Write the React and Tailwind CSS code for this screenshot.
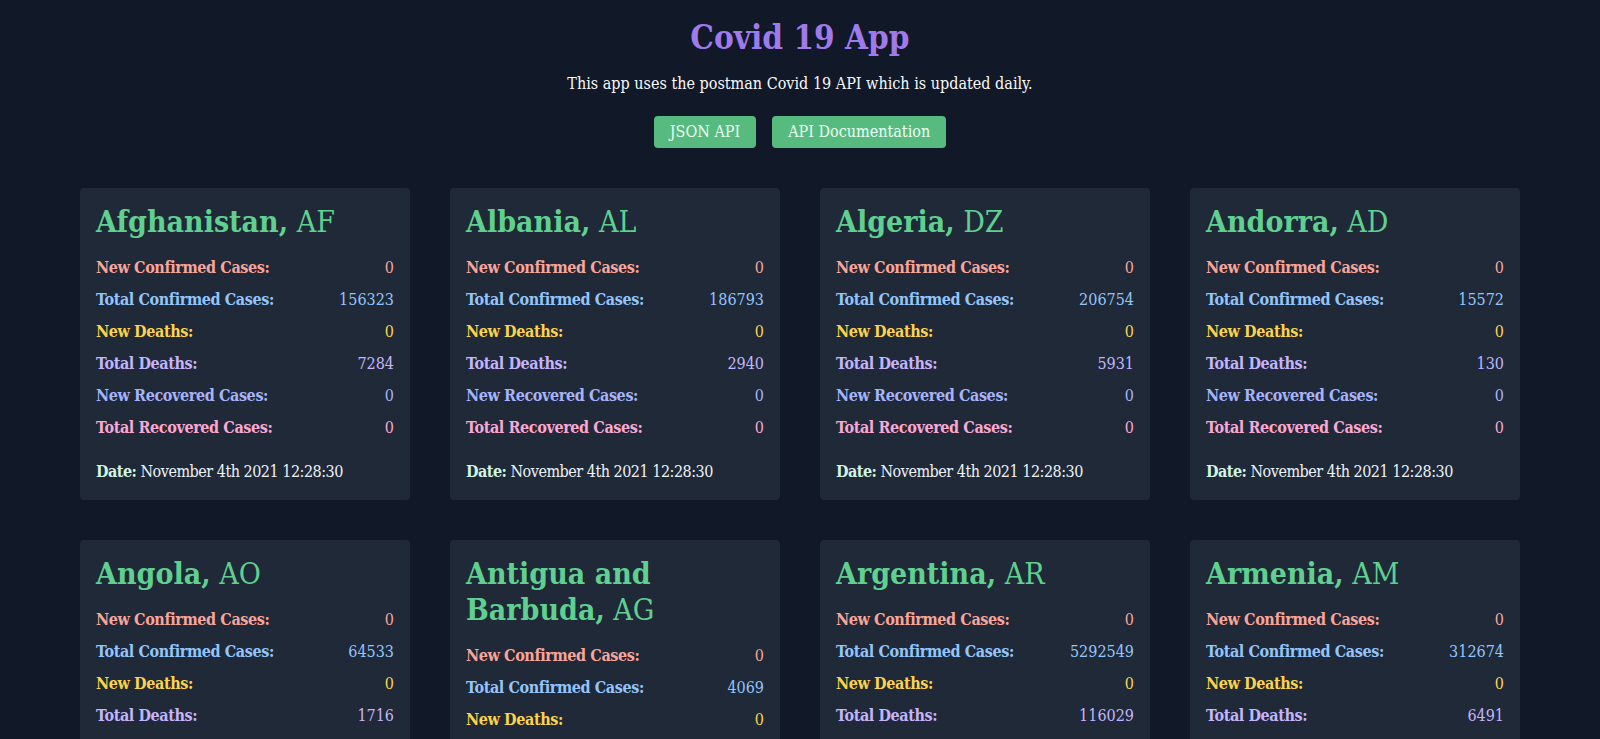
import { useState } from 'react'

const countries = [
  { name: 'Afghanistan', code: 'AF', newConfirmed: 0, totalConfirmed: 156323, newDeaths: 0, totalDeaths: 7284, newRecovered: 0, totalRecovered: 0 },
  { name: 'Albania', code: 'AL', newConfirmed: 0, totalConfirmed: 186793, newDeaths: 0, totalDeaths: 2940, newRecovered: 0, totalRecovered: 0 },
  { name: 'Algeria', code: 'DZ', newConfirmed: 0, totalConfirmed: 206754, newDeaths: 0, totalDeaths: 5931, newRecovered: 0, totalRecovered: 0 },
  { name: 'Andorra', code: 'AD', newConfirmed: 0, totalConfirmed: 15572, newDeaths: 0, totalDeaths: 130, newRecovered: 0, totalRecovered: 0 },
  { name: 'Angola', code: 'AO', newConfirmed: 0, totalConfirmed: 64533, newDeaths: 0, totalDeaths: 1716, newRecovered: 0, totalRecovered: 0 },
  { name: 'Antigua and Barbuda', code: 'AG', newConfirmed: 0, totalConfirmed: 4069, newDeaths: 0, totalDeaths: 108, newRecovered: 0, totalRecovered: 0 },
  { name: 'Argentina', code: 'AR', newConfirmed: 0, totalConfirmed: 5292549, newDeaths: 0, totalDeaths: 116029, newRecovered: 0, totalRecovered: 0 },
  { name: 'Armenia', code: 'AM', newConfirmed: 0, totalConfirmed: 312674, newDeaths: 0, totalDeaths: 6491, newRecovered: 0, totalRecovered: 0 },
]

function Row({ label, value, color }) {
  return (
    <div className={`flex justify-between py-1 ${color}`}>
      <span className="font-bold tracking-[-0.4px]">{label}</span>
      <span>{value}</span>
    </div>
  )
}

function CountryCard({ country }) {
  return (
    <div className="bg-[#1f2937] rounded p-4">
      <h2 className="text-3xl text-[#5fd08f] mb-3">
        <span className="font-bold">{country.name},</span> {country.code}
      </h2>
      <Row label="New Confirmed Cases:" value={country.newConfirmed} color="text-[#f9a59a]" />
      <Row label="Total Confirmed Cases:" value={country.totalConfirmed} color="text-[#93c5fd]" />
      <Row label="New Deaths:" value={country.newDeaths} color="text-[#fcd34d]" />
      <Row label="Total Deaths:" value={country.totalDeaths} color="text-[#c4b5fd]" />
      <Row label="New Recovered Cases:" value={country.newRecovered} color="text-[#a5b4fc]" />
      <Row label="Total Recovered Cases:" value={country.totalRecovered} color="text-[#f9a8d4]" />
      <div className="mt-4 text-[#edf2f7] tracking-[-0.5px]">
        <span className="font-bold text-[#d3f5e4]">Date:</span> November 4th 2021 12:28:30
      </div>
    </div>
  )
}

export default function App() {
  const [data] = useState(countries)

  return (
    <div className="min-h-screen bg-[#111827] text-white font-['DejaVu_Serif_Condensed','DejaVu_Serif',serif] pb-10">
      <header className="pt-5 text-center">
        <h1 className="text-[33px] leading-9 font-bold text-[#9f7aea]">Covid 19 App</h1>
        <p className="mt-4 text-[#f7fafc]">This app uses the postman Covid 19 API which is updated daily.</p>
        <div className="mt-5 flex justify-center gap-4">
          <a href="#" className="bg-[#57bb80] text-[#eafff3] rounded px-4 py-1">JSON API</a>
          <a href="#" className="bg-[#57bb80] text-[#eafff3] rounded px-4 py-1">API Documentation</a>
        </div>
      </header>

      <main className="mt-10 mx-auto w-[1440px] grid grid-cols-4 gap-10">
        {data.map(c => <CountryCard key={c.code} country={c} />)}
      </main>
    </div>
  )
}
